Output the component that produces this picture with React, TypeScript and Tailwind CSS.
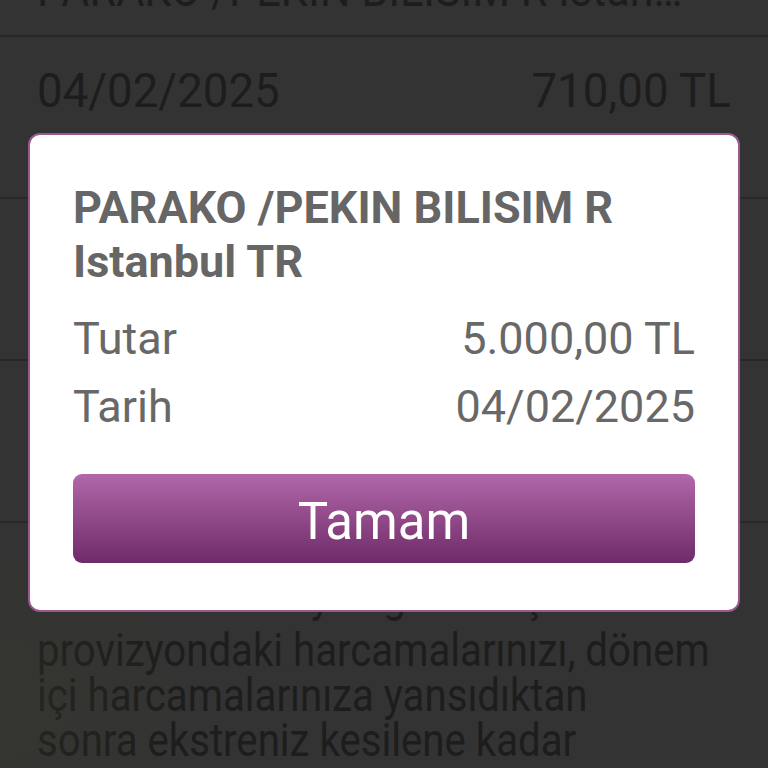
import React from "react";

const rows = [
  { date: "04/02/2025", amount: "5.000,00 TL", name: "PARAKO /PEKIN BILISIM R Istanbul TR" },
  { date: "04/02/2025", amount: "710,00 TL", name: "PARAKO /PEKIN BILISIM R Istanbul TR" },
  { date: "03/02/2025", amount: "1.250,00 TL", name: "MIGROS TICARET A.S. Istanbul TR" },
  { date: "02/02/2025", amount: "89,90 TL", name: "SPOTIFY Istanbul TR" },
];

const para = [
  "provizyondaki harcamalarınızı, dönem",
  "içi harcamalarınıza yansıdıktan",
  "sonra ekstreniz kesilene kadar",
];

function Row({ date, amount, name }: { date: string; amount: string; name: string }) {
  return (
    <div className="h-[162px] border-b-2 border-[#282828] px-[37px] pt-[26px]">
      <div className="flex justify-between text-[48px] leading-[56px] text-[#1d1d1d]">
        <span className="origin-left scale-x-[0.95] whitespace-nowrap">{date}</span>
        <span className="origin-right scale-x-[0.95] whitespace-nowrap">{amount}</span>
      </div>
      <div className="mt-[5px] w-[731px] origin-left scale-x-[0.9] truncate text-[48px] leading-[56px] text-[#1d1d1d]">
        {name}
      </div>
    </div>
  );
}

export default function App() {
  return (
    <div
      className="relative h-[768px] w-[768px] overflow-hidden bg-[#333333]"
      style={{ fontFamily: "Roboto, 'Noto Sans', sans-serif" }}
    >
      <div className="-mt-[125px]">
        {rows.map((r, i) => (
          <Row key={i} {...r} />
        ))}
      </div>
      <div className="px-[37px] pt-[50px]">
        <div className="mb-[9px] w-[790px] origin-left scale-x-[0.855] whitespace-nowrap text-[47px] leading-[45px] text-[#1d1d1d]">
          Kartınızın bekleyen günlük işlemlerini
        </div>
        {para.map((l, i) => (
          <div
            key={i}
            className="w-[790px] origin-left scale-x-[0.855] whitespace-nowrap text-[47px] leading-[45px] text-[#1d1d1d]"
          >
            {l}
          </div>
        ))}
      </div>

      {/* faint tint from the picture behind the dimmed page */}
      <div className="pointer-events-none absolute bottom-0 left-0 h-[230px] w-[200px] bg-[radial-gradient(ellipse_at_0%_70%,rgba(56,58,42,0.35),transparent_65%)]" />

      {/* dialog */}
      <div className="absolute left-[28px] top-[133px] w-[712px] rounded-[12px] border-2 border-[#9a5793] bg-white px-[43px] pb-[47px] pt-[46px]">
        <div className="text-[45px] font-bold leading-[54px] text-[#666666]">
          PARAKO /PEKIN BILISIM R
          <br />
          Istanbul TR
        </div>
        <div className="mt-[16px] text-[45px] leading-[68px] text-[#686868]">
          <div className="flex justify-between">
            <span>Tutar</span>
            <span>5.000,00 TL</span>
          </div>
          <div className="flex justify-between">
            <span>Tarih</span>
            <span>04/02/2025</span>
          </div>
        </div>
        <button className="mt-[33px] flex h-[89px] w-full items-center justify-center rounded-[9px] bg-gradient-to-b from-[#b267aa] to-[#6f2b69] pt-2 text-[51px] text-white">
          Tamam
        </button>
      </div>
    </div>
  );
}
